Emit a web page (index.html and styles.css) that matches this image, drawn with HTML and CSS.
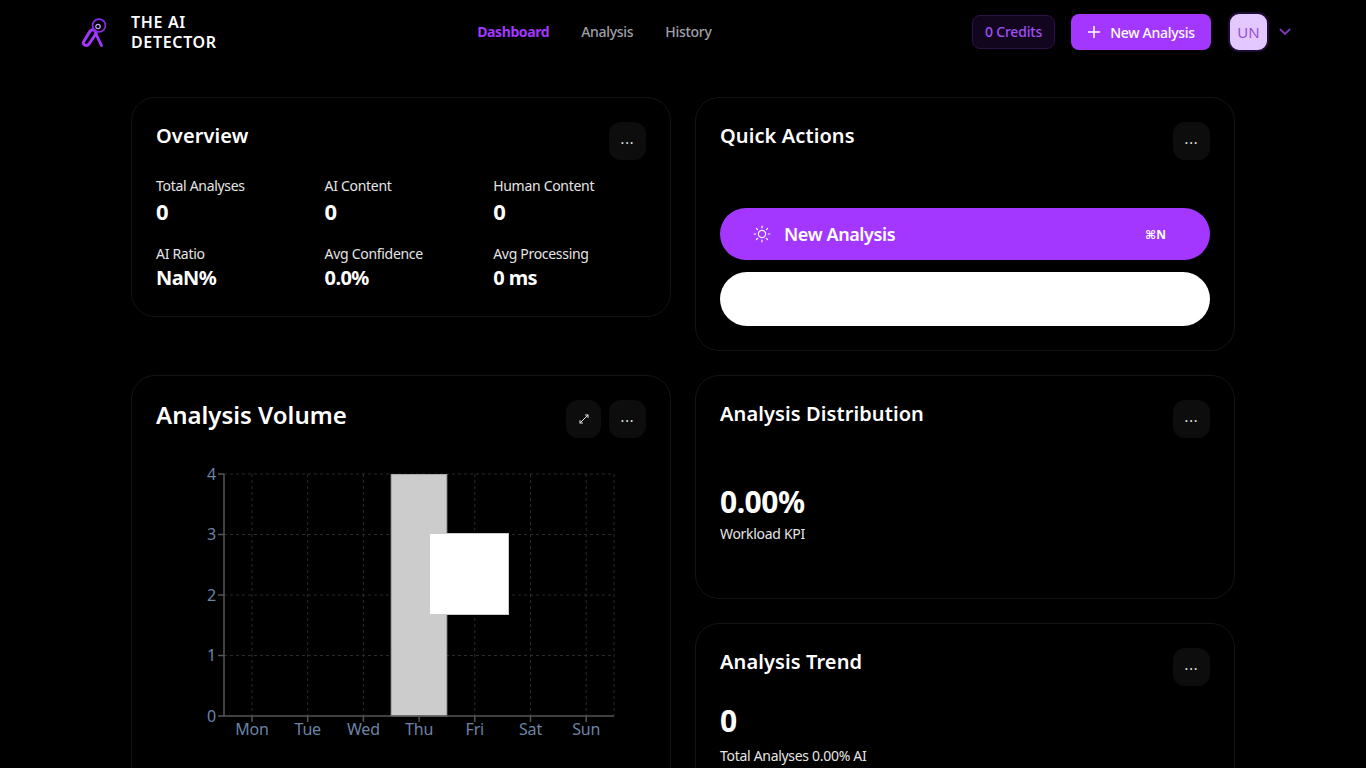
FILE: index.html
```html
<!DOCTYPE html>
<html lang="en">
<head>
    <meta charset="UTF-8">
    <meta name="viewport" content="width=device-width, initial-scale=1.0">
    <title>The AI Detector</title>
    <link rel="stylesheet" href="styles.css">
</head>
<body>
    <div class="app">
        <header class="topbar">
            <div class="brand">
                <svg class="brand-logo" width="30" height="34" viewBox="0 0 30 34" fill="none">
                    <path d="M2.5 26 L9 15.3 Q11 12.8 13.6 14.4 Q16 16 14.8 18 L8 28 Q6.2 30.2 3.8 29 Q1.5 27.8 2.5 26 Z" stroke="#a337ff" stroke-width="3" stroke-linejoin="round"/>
                    <path d="M14.5 17 L20.5 29.5" stroke="#a337ff" stroke-width="2.8" stroke-linecap="round"/>
                    <circle cx="18" cy="9.5" r="6.4" stroke="#8a2be2" stroke-width="1.7"/>
                    <circle cx="17" cy="10.5" r="2.2" stroke="#c9a2ff" stroke-width="1.2"/>
                </svg>
                <div class="brand-name">THE AI<br>DETECTOR</div>
            </div>
            <nav class="nav">
                <a class="nav-link active">Dashboard</a>
                <a class="nav-link">Analysis</a>
                <a class="nav-link">History</a>
            </nav>
            <div class="topbar-right">
                <div class="credits">0 Credits</div>
                <button class="new-btn">
                    <svg width="14" height="14" viewBox="0 0 14 14" fill="none"><path d="M7 1.5v11M1.5 7h11" stroke="#fff" stroke-width="1.5" stroke-linecap="round"/></svg>
                    New Analysis
                </button>
                <div class="avatar"><span>UN</span></div>
                <svg class="chevron" width="12" height="8" viewBox="0 0 12 8" fill="none"><path d="M1.5 1.5 6 6l4.5-4.5" stroke="#7b35b8" stroke-width="1.8" stroke-linecap="round" stroke-linejoin="round"/></svg>
            </div>
        </header>

        <main class="grid">
            <!-- Overview -->
            <section class="card overview">
                <div class="card-head">
                    <h2 class="card-title">Overview</h2>
                    <button class="icon-btn">...</button>
                </div>
                <div class="stats">
                    <div class="stat"><div class="stat-label">Total Analyses</div><div class="stat-value big">0</div></div>
                    <div class="stat"><div class="stat-label">AI Content</div><div class="stat-value big">0</div></div>
                    <div class="stat"><div class="stat-label">Human Content</div><div class="stat-value big">0</div></div>
                    <div class="stat"><div class="stat-label">AI Ratio</div><div class="stat-value">NaN%</div></div>
                    <div class="stat"><div class="stat-label">Avg Confidence</div><div class="stat-value">0.0%</div></div>
                    <div class="stat"><div class="stat-label">Avg Processing</div><div class="stat-value">0 ms</div></div>
                </div>
            </section>

            <!-- Quick actions -->
            <section class="card quick">
                <div class="card-head">
                    <h2 class="card-title">Quick Actions</h2>
                    <button class="icon-btn">...</button>
                </div>
                <div class="quick-list">
                    <button class="quick-btn primary">
                        <span class="quick-label">
                            <svg width="18" height="18" viewBox="0 0 18 18" fill="none" stroke="#fff" stroke-width="1.2" stroke-linecap="round">
                                <circle cx="9" cy="9" r="3.6"/>
                                <path d="M9 1.2v1.6M9 15.2v1.6M1.2 9h1.6M15.2 9h1.6M3.5 3.5l1.1 1.1M13.4 13.4l1.1 1.1M3.5 14.5l1.1-1.1M13.4 4.6l1.1-1.1"/>
                            </svg>
                            New Analysis
                        </span>
                        <span class="shortcut">⌘N</span>
                    </button>
                    <button class="quick-btn blank"></button>
                </div>
            </section>

            <!-- Volume chart -->
            <section class="card volume">
                <div class="card-head">
                    <h2 class="card-title large">Analysis Volume</h2>
                    <div class="head-actions">
                        <button class="icon-btn narrow">
                            <svg width="12" height="12" viewBox="0 0 12 12" fill="none" stroke="#e8e8e8" stroke-width="1" stroke-linecap="round"><path d="M2 10 10 2M7.5 2H10v2.5M2 7.5V10h2.5"/></svg>
                        </button>
                        <button class="icon-btn">...</button>
                    </div>
                </div>
                <div class="chart">
                    <svg width="490" height="300" viewBox="156 460 490 300">
                        <g stroke="#2b2b2b" stroke-dasharray="3 3">
                            <path d="M224 474H614M224 534.5H614M224 595H614M224 655.5H614"/>
                            <path d="M252 474V716M307.7 474V716M363.4 474V716M419.1 474V716M474.8 474V716M530.5 474V716M586.2 474V716M614 474V716"/>
                        </g>
                        <rect x="391.2" y="474.5" width="55.6" height="241.5" fill="#cccccc" stroke="#aaaaaa"/>
                        <g stroke="#555" stroke-width="1.5" fill="none">
                            <path d="M224 474V716H614"/>
                            <path d="M218 474h6M218 534.5h6M218 595h6M218 655.5h6M218 716h6"/>
                            <path d="M252 716v6M307.7 716v6M363.4 716v6M419.1 716v6M474.8 716v6M530.5 716v6M586.2 716v6"/>
                        </g>
                        <g class="tick" text-anchor="end">
                            <text x="216" y="480">4</text>
                            <text x="216" y="540">3</text>
                            <text x="216" y="601">2</text>
                            <text x="216" y="661">1</text>
                            <text x="216" y="722">0</text>
                        </g>
                        <g class="tick" text-anchor="middle">
                            <text x="252" y="735">Mon</text>
                            <text x="307.7" y="735">Tue</text>
                            <text x="363.4" y="735">Wed</text>
                            <text x="419.1" y="735">Thu</text>
                            <text x="474.8" y="735">Fri</text>
                            <text x="530.5" y="735">Sat</text>
                            <text x="586.2" y="735">Sun</text>
                        </g>
                    </svg>
                    <div class="chart-tip"></div>
                </div>
            </section>

            <!-- Distribution -->
            <section class="card distribution">
                <div class="card-head">
                    <h2 class="card-title">Analysis Distribution</h2>
                    <button class="icon-btn">...</button>
                </div>
                <div class="kpi kpi-center">
                    <div class="kpi-value">0.00%</div>
                    <div class="kpi-label">Workload KPI</div>
                </div>
            </section>

            <!-- Trend -->
            <section class="card trend">
                <div class="card-head">
                    <h2 class="card-title">Analysis Trend</h2>
                    <button class="icon-btn">...</button>
                </div>
                <div class="kpi">
                    <div class="kpi-value">0</div>
                    <div class="kpi-label">Total Analyses 0.00% AI</div>
                </div>
            </section>
        </main>
    </div>
</body>
</html>
```

FILE: styles.css
```css
* {
    box-sizing: border-box;
}

html, body {
    margin: 0;
    padding: 0;
    background-color: #000000;
}

body {
    font-family: "Noto Sans", "DejaVu Sans", sans-serif;
    color: #ffffff;
}

.app {
    height: 100vh;
    overflow: hidden;
}

.topbar {
    display: flex;
    align-items: center;
    justify-content: space-between;
    height: 64px;
    padding: 0 75px 0 81px;
}

.brand {
    display: flex;
    align-items: center;
    gap: 20px;
}

.brand-logo {
    margin-top: 2px;
}

.brand-name {
    font-size: 16px;
    font-weight: 600;
    line-height: 20px;
    letter-spacing: 0.65px;
}

.nav {
    display: flex;
    gap: 32px;
    margin-bottom: 2px;
}

.nav-link {
    font-size: 14px;
    font-weight: 500;
    letter-spacing: -0.3px;
    color: #a1a1aa;
}

.nav-link.active {
    color: #a337ff;
    font-weight: 700;
    letter-spacing: -0.4px;
}

.topbar-right {
    display: flex;
    align-items: center;
}

.credits {
    display: flex;
    align-items: center;
    justify-content: center;
    width: 83px;
    height: 34px;
    margin-right: 16px;
    padding-bottom: 2px;
    border: 1px solid #2b1147;
    border-radius: 8px;
    background-color: #12061f;
    color: #a04ff0;
    font-size: 14px;
    font-weight: 500;
    letter-spacing: -0.2px;
}

.new-btn {
    display: flex;
    align-items: center;
    justify-content: center;
    gap: 9px;
    width: 140px;
    height: 36px;
    margin-right: 17px;
    padding-bottom: 1px;
    border: none;
    border-radius: 8px;
    background-color: #a337ff;
    color: #ffffff;
    font-family: inherit;
    font-size: 14px;
    font-weight: 500;
    letter-spacing: -0.3px;
}

.avatar {
    display: flex;
    align-items: center;
    justify-content: center;
    width: 41px;
    height: 40px;
    margin-right: 10px;
    border: 2px solid #1d0d33;
    border-radius: 11px;
    background-color: #e3c8ff;
    color: #9a4fd8;
    font-size: 15px;
}

.grid {
    display: grid;
    grid-template-columns: 540px 540px;
    grid-template-rows: auto auto auto;
    gap: 24px;
    align-items: start;
    width: 1104px;
    margin: 33px 0 0 131px;
}

.card {
    padding: 24px;
    border: 1px solid #121416;
    border-radius: 24px;
    background-color: #000000;
}

.overview { grid-column: 1; grid-row: 1; height: 220px; }
.quick { grid-column: 2; grid-row: 1; height: 254px; }
.volume { grid-column: 1; grid-row: 2 / span 2; height: 460px; }
.distribution { grid-column: 2; grid-row: 2; height: 224px; }
.trend { grid-column: 2; grid-row: 3; height: 220px; }

.card-head {
    display: flex;
    justify-content: space-between;
    align-items: flex-start;
}

.card-title {
    margin: 0;
    font-size: 20px;
    font-weight: 600;
    line-height: 28px;
    letter-spacing: 0.1px;
}

.card-title.large {
    font-size: 24px;
    line-height: 30px;
    letter-spacing: 0;
}

.head-actions {
    display: flex;
    gap: 8px;
}

.icon-btn {
    display: flex;
    align-items: center;
    justify-content: center;
    width: 37px;
    height: 38px;
    padding: 0 0 6px;
    border: none;
    border-radius: 12px;
    background-color: #0d0d0d;
    color: #e8e8e8;
    font-family: inherit;
    font-size: 14px;
    letter-spacing: 0.9px;
}

.icon-btn.narrow {
    width: 35px;
    padding: 0;
}

.stats {
    display: grid;
    grid-template-columns: repeat(3, 168.6px);
    margin-top: 16px;
}

.stat-label {
    font-size: 14px;
    line-height: 20px;
    letter-spacing: -0.3px;
    color: #e5e5e5;
}

.stat-value {
    margin-top: 1px;
    margin-bottom: 11px;
    font-size: 20px;
    font-weight: 700;
    line-height: 26px;
    letter-spacing: -0.6px;
}

.stat-value.big {
    margin-top: 0;
    margin-bottom: 18px;
    font-size: 22px;
    line-height: 30px;
}

.quick-list {
    display: flex;
    flex-direction: column;
    gap: 12px;
    margin-top: 48px;
}

.quick-btn {
    display: flex;
    align-items: center;
    justify-content: space-between;
    width: 100%;
    padding: 0 44px 0 33px;
    border: none;
    border-radius: 27px;
    font-family: inherit;
    color: #ffffff;
}

.quick-btn.primary {
    height: 52px;
    background-color: #a337ff;
}

.quick-btn.blank {
    height: 54px;
    background-color: #ffffff;
}

.quick-label {
    display: flex;
    align-items: center;
    gap: 13px;
    font-size: 18px;
    font-weight: 600;
    letter-spacing: -0.4px;
}

.shortcut {
    font-size: 12px;
    font-weight: 700;
}

.chart {
    position: relative;
    margin-top: 22px;
}

.chart svg {
    display: block;
}

.tick text {
    font-size: 16px;
    letter-spacing: -0.2px;
    fill: #6b84a8;
}

/* caja blanca encima de la barra */
.chart-tip {
    position: absolute;
    left: 274px;
    top: 73px;
    width: 79px;
    height: 82px;
    border: 1px solid #cccccc;
    border-left: none;
    background-color: #ffffff;
}

.kpi {
    margin-top: 15px;
}

.kpi-center {
    margin-top: 44px;
}

.kpi-value {
    font-size: 30px;
    font-weight: 700;
    line-height: 40px;
    letter-spacing: -0.5px;
}

.kpi-label {
    margin-top: 2px;
    font-size: 14px;
    line-height: 20px;
    letter-spacing: -0.3px;
    color: #e5e5e5;
}

.trend .kpi-value {
    margin-bottom: 5px;
}
```
